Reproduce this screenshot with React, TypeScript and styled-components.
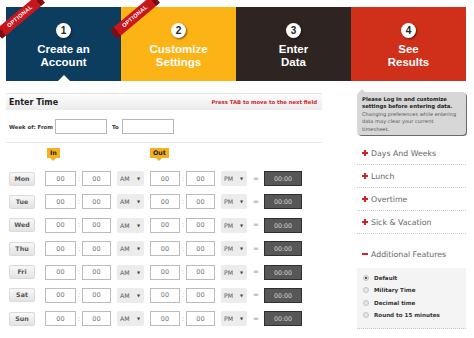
import styled, { createGlobalStyle } from 'styled-components';

const GlobalStyle = createGlobalStyle`
  html, body { margin: 0; padding: 0; background: #fff; }
  body { font-family: 'DejaVu Sans', Verdana, sans-serif; }
`;

const steps = [
  { n: 1, lines: ['Create an', 'Account'], bg: '#0d3d5e', optional: true, active: true },
  { n: 2, lines: ['Customize', 'Settings'], bg: '#fcb316', optional: true, active: false },
  { n: 3, lines: ['Enter', 'Data'], bg: '#2e2421', optional: false, active: false },
  { n: 4, lines: ['See', 'Results'], bg: '#d0301a', optional: false, active: false },
];

const days = ['Mon', 'Tue', 'Wed', 'Thu', 'Fri', 'Sat', 'Sun'];
const sections = ['Days And Weeks', 'Lunch', 'Overtime', 'Sick & Vacation'];
const features = ['Default', 'Military Time', 'Decimal time', 'Round to 15 minutes'];

export default function App() {
  return (
    <>
      <GlobalStyle />
      <Page>
        <Steps>
          {steps.map(s => (
            <Step key={s.n} $bg={s.bg} $active={s.active}>
              {s.optional && <Ribbon>OPTIONAL</Ribbon>}
              <StepNumber>{s.n}</StepNumber>
              <StepLabel>
                {s.lines[0]}
                <br />
                {s.lines[1]}
              </StepLabel>
            </Step>
          ))}
        </Steps>

        <Content>
          <Main>
            <SectionBar>
              <SectionTitle>Enter Time</SectionTitle>
              <TabNote>Press TAB to move to the next field</TabNote>
            </SectionBar>

            <WeekRow>
              <WeekLabel>Week of: From</WeekLabel>
              <DateInput readOnly />
              <WeekLabel $gap>To</WeekLabel>
              <DateInput readOnly />
            </WeekRow>

            <BadgeRow>
              <Badge $col={2} $offset={2}>In</Badge>
              <Badge $col={4} $offset={0}>Out</Badge>
            </BadgeRow>

            <DayList>
              {days.map(d => (
                <DayRow key={d}>
                  <DayButton>{d}</DayButton>
                  <TimePair>
                    <TimeInput readOnly value="00" />
                    <Colon>:</Colon>
                    <TimeInput readOnly value="00" $w={29} />
                  </TimePair>
                  <Meridiem>
                    AM <Caret>▼</Caret>
                  </Meridiem>
                  <TimePair>
                    <TimeInput readOnly value="00" />
                    <Colon>:</Colon>
                    <TimeInput readOnly value="00" $w={29} />
                  </TimePair>
                  <Meridiem>
                    PM <Caret>▼</Caret>
                  </Meridiem>
                  <Equals>=</Equals>
                  <Total>00:00</Total>
                </DayRow>
              ))}
            </DayList>
          </Main>

          <Sidebar>
            <Tip>
              <strong>Please Log In and customize settings before entering data.</strong>
              <br />
              Changing preferences while entering data may clear your current timesheet.
            </Tip>

            {sections.map(s => (
              <SideItem key={s}>
                <Sign $open={false} />
                {s}
              </SideItem>
            ))}

            <FeatureHead>
              <Sign $open />
              Additional Features
            </FeatureHead>
            <FeatureBox>
              {features.map((f, i) => (
                <Radio key={f}>
                  <RadioDot $checked={i === 0} />
                  {f}
                </Radio>
              ))}
            </FeatureBox>
          </Sidebar>
        </Content>
      </Page>
    </>
  );
}

const Page = styled.div`
  width: 474px;
  height: 338px;
  padding: 7px 8px 0 6px;
  box-sizing: border-box;
  overflow: hidden;
`;

const Steps = styled.div`
  display: flex;
  height: 74px;
`;

const Step = styled.div<{ $bg: string; $active: boolean }>`
  position: relative;
  flex: 1;
  display: flex;
  flex-direction: column;
  align-items: center;
  padding-top: 16px;
  box-sizing: border-box;
  background: ${p => p.$bg};
  color: #fff;
  font-family: 'Liberation Sans', Arial, sans-serif;

  &::after {
    content: ${p => (p.$active ? "''" : 'none')};
    position: absolute;
    bottom: 0;
    left: 50%;
    margin-left: -6px;
    border-left: 6px solid transparent;
    border-right: 6px solid transparent;
    border-bottom: 6px solid #fff;
  }
`;

const Ribbon = styled.span`
  position: absolute;
  left: -14px;
  top: 4px;
  width: 56px;
  height: 11px;
  transform: rotate(-40deg);
  background: linear-gradient(90deg, #7d0d10 0 9%, #c8161d 9% 91%, #7d0d10 91%);
  color: #fff;
  font: bold 5.6px 'Liberation Sans', Arial, sans-serif;
  letter-spacing: 0.3px;
  line-height: 11px;
  text-align: center;
  z-index: 2;
`;

const StepNumber = styled.span`
  width: 15px;
  height: 15px;
  border-radius: 50%;
  background: #fff;
  box-shadow: 1px 1px 2px rgba(0, 0, 0, 0.55);
  color: #222;
  font-size: 10px;
  font-weight: bold;
  line-height: 15px;
  text-align: center;
`;

const StepLabel = styled.div`
  margin-top: 5px;
  font-size: 11.5px;
  font-weight: bold;
  line-height: 13px;
  text-align: center;
`;

const Content = styled.div`
  display: flex;
  margin-top: 11px;
`;

const Main = styled.div`
  width: 316px;
  padding-top: 1px;
`;

const SectionBar = styled.div`
  display: flex;
  justify-content: space-between;
  align-items: center;
  height: 17px;
  padding: 0 5px 0 3px;
  background: linear-gradient(#fdfdfd, #ebebeb);
  border-top: 1px solid #e2e2e2;
  box-sizing: border-box;
`;

const SectionTitle = styled.span`
  font-size: 8px;
  font-weight: bold;
  color: #222;
`;

const TabNote = styled.span`
  font-size: 5.3px;
  font-weight: bold;
  color: #d2232a;
`;

const WeekRow = styled.div`
  display: flex;
  align-items: center;
  margin-top: 9px;
  padding: 0 0 8px 3px;
  border-bottom: 1px solid #e8e8e8;
`;

const WeekLabel = styled.span<{ $gap?: boolean }>`
  font-size: 5.4px;
  font-weight: bold;
  color: #333;
  margin: ${p => (p.$gap ? '0 3px 0 5px' : '0 2px 0 0')};
`;

const DateInput = styled.input`
  width: 52px;
  height: 15px;
  padding: 0;
  box-sizing: border-box;
  border: 1px solid #b8b8b8;
  outline: none;
`;

const rowColumns = '30px 66px 27px 65px 26px 5px 38px';

const BadgeRow = styled.div`
  display: grid;
  grid-template-columns: ${rowColumns};
  column-gap: 6px;
  padding-left: 3px;
  margin-top: 5px;
  height: 10px;
`;

const Badge = styled.span<{ $col: number; $offset: number }>`
  position: relative;
  grid-column: ${p => p.$col};
  justify-self: start;
  margin-left: ${p => p.$offset}px;
  height: 10px;
  padding: 0 3px;
  background: #f5b11b;
  color: #222;
  font-size: 6.3px;
  font-weight: bold;
  line-height: 10px;

  &::after {
    content: '';
    position: absolute;
    left: 50%;
    bottom: -3px;
    margin-left: -3px;
    border-left: 3px solid transparent;
    border-right: 3px solid transparent;
    border-top: 3px solid #f5b11b;
  }
`;

const DayList = styled.div`
  display: flex;
  flex-direction: column;
  gap: 8.4px;
  margin-top: 13px;
`;

const DayRow = styled.div`
  display: grid;
  grid-template-columns: ${rowColumns};
  column-gap: 6px;
  align-items: center;
  padding-left: 3px;
  height: 15px;
`;

const DayButton = styled.span`
  width: 26px;
  height: 14px;
  box-sizing: border-box;
  border: 1px solid #dadada;
  border-radius: 2px;
  background: linear-gradient(#f8f8f8, #e3e3e3);
  color: #555;
  font-size: 6.3px;
  font-weight: bold;
  line-height: 12px;
  text-align: center;
`;

const TimePair = styled.div`
  display: flex;
  align-items: center;
`;

const TimeInput = styled.input<{ $w?: number }>`
  ${p => (p.$w ? `width: ${p.$w}px;` : 'flex: 1; min-width: 0;')}
  height: 15px;
  padding: 0;
  box-sizing: border-box;
  border: 1px solid #bcbcbc;
  outline: none;
  color: #777;
  font-family: 'DejaVu Sans', Verdana, sans-serif;
  font-size: 6.5px;
  text-align: center;
`;

const Colon = styled.span`
  width: 6px;
  text-align: center;
  color: #aaa;
  font-size: 7px;
`;

const Meridiem = styled.span`
  display: flex;
  justify-content: space-between;
  align-items: center;
  height: 15px;
  padding: 0 4px 0 3px;
  border-radius: 2px;
  background: #ececec;
  color: #555;
  font-size: 6.2px;
`;

const Caret = styled.span`
  font-size: 4px;
  color: #444;
`;

const Equals = styled.span`
  text-align: center;
  color: #999;
  font-size: 7px;
`;

const Total = styled.span`
  height: 15px;
  box-sizing: border-box;
  border: 1px solid #2f2f2f;
  background: #575757;
  color: #d8d8d8;
  font-size: 6.3px;
  line-height: 13px;
  text-align: center;
`;

const Sidebar = styled.div`
  width: 109px;
  margin-left: 35px;
`;

const Tip = styled.div`
  position: relative;
  height: 43px;
  margin-bottom: 7px;
  padding: 4px 4px 0 5px;
  box-sizing: border-box;
  border-radius: 4px;
  background: #d7d7d7;
  box-shadow: 1px 1px 0 #6a6a6a;
  color: #555;
  font-size: 5.1px;
  line-height: 7.4px;

  strong {
    color: #222;
    font-size: 5.3px;
  }

  &::before {
    content: '';
    position: absolute;
    left: 2px;
    top: -3px;
    border-left: 3px solid transparent;
    border-right: 3px solid transparent;
    border-bottom: 3px solid #d7d7d7;
  }
`;

const SideItem = styled.div`
  display: flex;
  align-items: center;
  height: 23px;
  padding-left: 5px;
  box-sizing: border-box;
  border-bottom: 1px dotted #c8c8c8;
  color: #666;
  font-size: 7.8px;
`;

const Sign = styled.span<{ $open: boolean }>`
  position: relative;
  width: 6px;
  height: 6px;
  margin-right: 3px;
  flex: none;

  &::before,
  &::after {
    content: '';
    position: absolute;
    background: #d3232a;
  }
  &::before {
    left: 0;
    right: 0;
    top: 2px;
    height: 2px;
  }
  &::after {
    display: ${p => (p.$open ? 'none' : 'block')};
    top: 0;
    bottom: 0;
    left: 2px;
    width: 2px;
  }
`;

const FeatureHead = styled(SideItem)`
  height: 12px;
  margin-top: 14px;
  border-bottom: none;
`;

const FeatureBox = styled.div`
  margin-top: 8px;
  padding: 4px 0 7px 6px;
  background: #f4f4f4;
  border-bottom: 1px dotted #c8c8c8;
`;

const Radio = styled.div`
  display: flex;
  align-items: center;
  height: 12.3px;
  color: #333;
  font-size: 5.6px;
  font-weight: bold;
`;

const RadioDot = styled.span<{ $checked: boolean }>`
  width: 6px;
  height: 6px;
  margin-right: 5px;
  box-sizing: border-box;
  border-radius: 50%;
  border: 1px solid #c4c4c4;
  background: ${p =>
    p.$checked ? 'radial-gradient(circle, #555 0 1.3px, #e8e8e8 1.6px)' : '#e6e6e6'};
`;
